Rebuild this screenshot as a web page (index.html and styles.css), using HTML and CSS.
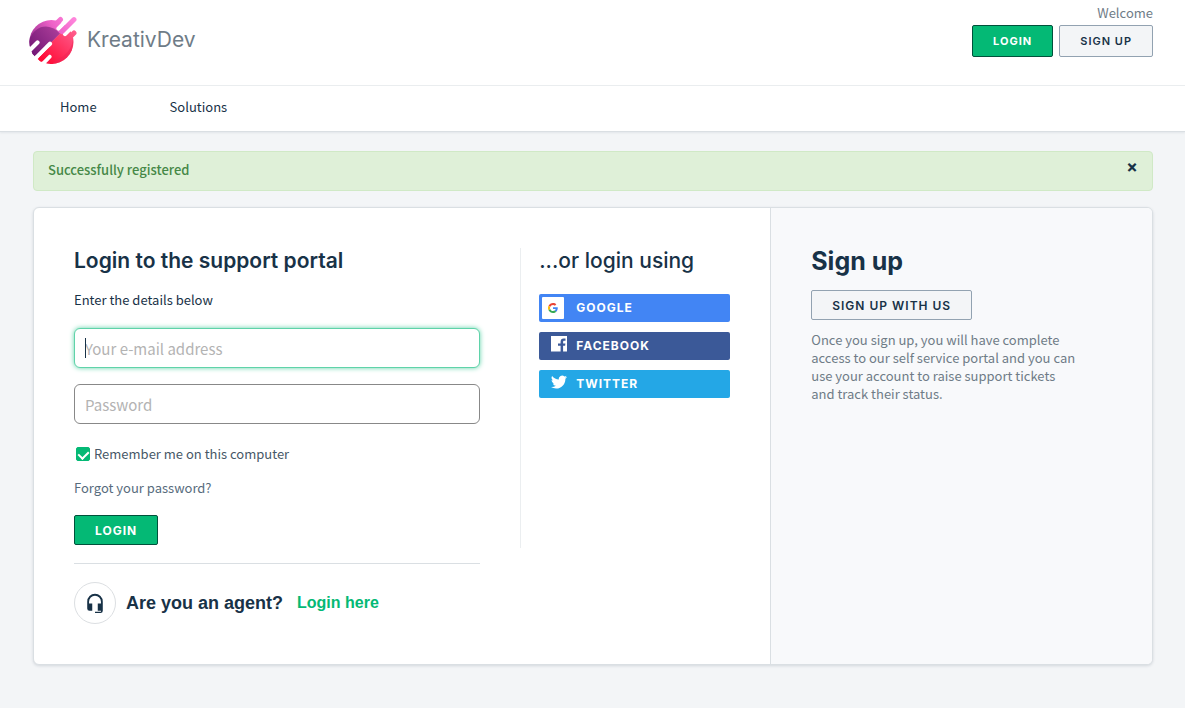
FILE: index.html
```html
<!DOCTYPE html>
<html lang="en">
<head>
    <meta charset="UTF-8">
    <meta name="viewport" content="width=device-width, initial-scale=1.0">
    <title>KreativDev - Support Portal</title>
    <link rel="stylesheet" href="styles.css">
</head>
<body>
    <header class="header">
        <a class="brand" href="#">
            <svg class="logo" viewBox="0 0 48 48" aria-hidden="true">
                <defs>
                    <linearGradient id="pink" gradientUnits="userSpaceOnUse" x1="46" y1="3" x2="2" y2="34">
                        <stop offset="0" stop-color="#ff86dc"/>
                        <stop offset="0.4" stop-color="#ee62c8"/>
                        <stop offset="1" stop-color="#8b2788"/>
                    </linearGradient>
                    <linearGradient id="purple" gradientUnits="userSpaceOnUse" x1="32" y1="12" x2="4" y2="36">
                        <stop offset="0" stop-color="#b0409c"/>
                        <stop offset="1" stop-color="#761a78"/>
                    </linearGradient>
                    <linearGradient id="red" gradientUnits="userSpaceOnUse" x1="44" y1="14" x2="16" y2="46">
                        <stop offset="0" stop-color="#ff5c8c"/>
                        <stop offset="1" stop-color="#ff0a35"/>
                    </linearGradient>
                    <clipPath id="disc"><circle cx="22.4" cy="26" r="22"/></clipPath>
                </defs>
                <g clip-path="url(#disc)">
                    <path d="M0 0H48.4L0 48.4z" fill="url(#pink)"/>
                    <path d="M0 48.4L48.4 0V48.4z" fill="url(#red)"/>
                    <path d="M0 48.4V24C6 9 20 6 31 17.4z" fill="url(#purple)"/>
                    <path d="M44 20C44 36 32 46 16 44L20 50H48V20z" fill="#ee2354" opacity=".5"/>
                </g>
                <g fill="none" stroke="#fff" stroke-width="4.2" stroke-linecap="round">
                    <path d="M29.5 12.500L44 -2M36 18L50 4M8.500 26.500L-4 39M21 27.700L-2 50.700M20.500 40.800L10 51.300"/>
                </g>
                <g fill="none" stroke-width="5" stroke-linecap="round">
                    <path d="M26 9L31.500 3.500M33 15.600L45 3.600" stroke="url(#pink)"/>
                    <path d="M14 28L5.500 36.500" stroke="url(#purple)"/>
                    <path d="M38 24L45 17M22 33.300L12.300 43M27 41L22.500 45.500" stroke="url(#red)"/>
                </g>
            </svg>
            <span class="brand-name">KreativDev</span>
        </a>
        <div class="account">
            <span class="welcome">Welcome</span>
            <div class="account-buttons">
                <button class="btn btn-primary btn-top" type="button">Login</button>
                <button class="btn btn-plain btn-top" type="button">Sign up</button>
            </div>
        </div>
    </header>

    <nav class="nav">
        <a href="#">Home</a>
        <a href="#">Solutions</a>
    </nav>

    <main class="page">
        <div class="alert" role="status">
            <span>Successfully registered</span>
            <button class="alert-close" type="button" aria-label="Close">×</button>
        </div>

        <div class="card">
            <div class="card-main">
                <section class="login">
                    <h3 class="title title-login">Login to the support portal</h3>
                    <p class="hint">Enter the details below</p>
                    <form>
                        <div class="field-wrap">
                            <input class="field" type="email" placeholder="Your e-mail address" aria-label="Your e-mail address" autofocus>
                        </div>
                        <input class="field" type="password" placeholder="Password" aria-label="Password">
                        <label class="remember">
                            <input type="checkbox" checked>
                            Remember me on this computer
                        </label>
                        <a class="forgot" href="#">Forgot your password?</a>
                        <button class="btn btn-primary btn-login" type="submit">Login</button>
                    </form>
                    <div class="agent">
                        <span class="agent-icon">
                            <svg viewBox="0 0 24 24" aria-hidden="true">
                                <path d="M12 2a8.500 8.500 0 0 0-8.500 8.500V18A2.500 2.500 0 0 0 6 20.500h3v-8H5.500v-2a6.500 6.500 0 0 1 13 0v2H15v8h3.500v1H12v1.500h6a2.500 2.500 0 0 0 2.500-2.500V10.500A8.500 8.500 0 0 0 12 2z"/>
                            </svg>
                        </span>
                        <span class="agent-text">Are you an agent?</span>
                        <a class="agent-link" href="#">Login here</a>
                    </div>
                </section>

                <section class="social">
                    <h3 class="title">...or login using</h3>
                    <a class="social-btn google" href="#">
                        <span class="google-box">
                            <svg viewBox="0 0 48 48" aria-hidden="true">
                                <path fill="#ea4335" d="M24 9.500c3.540 0 6.710 1.220 9.210 3.600l6.850-6.850C35.900 2.380 30.470 0 24 0 14.620 0 6.510 5.380 2.560 13.220l7.980 6.190C12.430 13.720 17.740 9.500 24 9.500z"/>
                                <path fill="#4285f4" d="M46.980 24.550c0-1.570-.15-3.090-.38-4.550H24v9.020h12.940c-.58 2.960-2.260 5.480-4.780 7.180l7.730 6c4.510-4.180 7.090-10.360 7.090-17.650z"/>
                                <path fill="#fbbc05" d="M10.530 28.590c-.48-1.450-.76-2.990-.76-4.590s.27-3.140.76-4.590l-7.980-6.190C.92 16.460 0 20.120 0 24s.92 7.540 2.560 10.780z"/>
                                <path fill="#34a853" d="M24 48c6.480 0 11.930-2.130 15.890-5.810l-7.730-6c-2.150 1.450-4.920 2.300-8.160 2.300-6.260 0-11.570-4.220-13.470-9.910l-7.980 6.190C6.510 42.620 14.620 48 24 48z"/>
                            </svg>
                        </span>
                        <span>Google</span>
                    </a>
                    <a class="social-btn facebook" href="#">
                        <svg class="social-icon" viewBox="0 0 16 16" aria-hidden="true">
                            <path fill="#fff" d="M0 0h16v15.500h-3.900V9.700h2l.3-2.300h-2.300V6c0-.8.300-1.200 1.200-1.200h1.200V2.600h-1.800c-2.100 0-3.100 1.200-3.100 3.300v1.500H7V9.700h2.600v5.800H0z"/>
                        </svg>
                        <span>Facebook</span>
                    </a>
                    <a class="social-btn twitter" href="#">
                        <svg class="social-icon" viewBox="0 0 24 24" aria-hidden="true">
                            <path fill="#fff" d="M24 4.560a9.830 9.830 0 0 1-2.830.77 4.930 4.930 0 0 0 2.170-2.720 9.860 9.860 0 0 1-3.130 1.190 4.920 4.920 0 0 0-8.380 4.480A13.980 13.980 0 0 1 1.670 3.150a4.930 4.930 0 0 0 1.520 6.570 4.900 4.900 0 0 1-2.230-.61c-.05 2.280 1.580 4.410 3.950 4.890a4.930 4.930 0 0 1-2.220.08 4.930 4.930 0 0 0 4.600 3.420A9.900 9.900 0 0 1 0 19.540a13.940 13.940 0 0 0 7.550 2.210c9.140 0 14.310-7.720 14-14.640A10.020 10.020 0 0 0 24 4.560z"/>
                        </svg>
                        <span>Twitter</span>
                    </a>
                </section>
            </div>

            <aside class="signup">
                <h2 class="signup-title">Sign up</h2>
                <button class="btn btn-plain btn-signup" type="button">Sign up with us</button>
                <p class="signup-text">Once you sign up, you will have complete access to our self service portal and you can use your account to raise support tickets and track their status.</p>
            </aside>
        </div>
    </main>
</body>
</html>
```
FILE: styles.css
```css
* { margin: 0; padding: 0; box-sizing: border-box; }

body {
    font-family: "Noto Sans CJK SC", "Noto Sans", sans-serif;
    font-size: 13px;
    line-height: 18px;
    background: #f3f5f7;
    color: #183247;
}

a {
    color: inherit;
    text-decoration: none;
}

/* header */
.header {
    display: flex;
    justify-content: space-between;
    align-items: flex-start;
    padding: 0 32px 0 29px;
    height: 86px;
    background: #fff;
    border-bottom: 1px solid #ebeef0;
}

.brand {
    display: flex;
    align-items: center;
    gap: 10px;
    padding-top: 16px;
}

.logo {
    width: 48px;
    height: 48px;
}

.brand-name {
    font-family: Inter, sans-serif;
    font-size: 21px;
    line-height: 28px;
    color: #6f7c87;
}

.account {
    display: flex;
    flex-direction: column;
    align-items: flex-end;
    gap: 3px;
    padding-top: 4px;
}

.welcome {
    color: #6f7c87;
}

.account-buttons {
    display: flex;
    gap: 6px;
}

.btn {
    height: 30px;
    padding: 0 20px;
    border: 1px solid;
    border-radius: 2px;
    font-family: Inter, sans-serif;
    font-size: 12px;
    font-weight: 600;
    letter-spacing: 1px;
    text-transform: uppercase;
    cursor: pointer;
}

.btn-primary {
    background: #04b975;
    border-color: #00513b;
    color: #fff;
    font-weight: 700;
}

.btn-plain {
    background: #f3f5f7;
    border-color: #92a2b1;
    color: #183247;
}

.btn-top {
    height: 32px;
    font-size: 11px;
}

/* nav */
.nav {
    display: flex;
    gap: 73px;
    padding: 12px 60px 15px;
    background: #fff;
    border-bottom: 1px solid #dadfe3;
    box-shadow: 0 1px 2px rgba(24, 50, 71, 0.08);
}

.page {
    padding: 19px 32px 40px 33px;
}

.alert {
    display: flex;
    justify-content: space-between;
    align-items: flex-start;
    padding: 9px 14px;
    height: 40px;
    margin-bottom: 16px;
    background: #dff0d8;
    border: 1px solid #d0e9c6;
    border-radius: 4px;
    color: #468847;
    font-weight: 500;
}

.alert-close {
    width: 12px;
    height: 12px;
    background: none;
    border: none;
    font-family: Inter, sans-serif;
    font-size: 17px;
    font-weight: 700;
    line-height: 10px;
    color: #183247;
    cursor: pointer;
}

/* card */
.card {
    display: grid;
    grid-template-columns: 27fr 14fr;
    background: #fff;
    border: 1px solid #dadfe3;
    border-radius: 6px;
    box-shadow: 0 1px 3px rgba(24, 50, 71, 0.15);
    overflow: hidden;
}

.card-main {
    display: flex;
    align-items: flex-start;
    padding: 40px;
}

.login {
    flex: 1;
    padding-right: 40px;
}

.title {
    font-family: Inter, sans-serif;
    font-size: 21px;
    font-weight: 500;
    line-height: 26px;
}

.title-login {
    font-weight: 600;
}

.hint {
    margin: 17px 0 19px;
}

.field-wrap {
    position: relative;
}

/* text caret of the focused field */
.field-wrap:focus-within::after {
    content: "";
    position: absolute;
    top: 10px;
    left: 11px;
    width: 1px;
    height: 20px;
    background: #183247;
}

.field-wrap .field {
    caret-color: transparent;
}

.field {
    display: block;
    width: 100%;
    height: 40px;
    padding: 0 10px;
    margin-bottom: 16px;
    border: 1px solid #888;
    border-radius: 6px;
    font-family: inherit;
    font-size: 15px;
    color: #183247;
}

.field::placeholder {
    color: #b3b3b3;
}

.field:focus {
    outline: none;
    border-color: #5fd3a9;
    box-shadow: 0 0 5px #5fd3a9;
}

.remember {
    display: flex;
    align-items: center;
    gap: 4px;
    padding: 5px 0 0 2px;
    color: #475867;
}

.remember input {
    display: flex;
    justify-content: center;
    appearance: none;
    width: 14px;
    height: 14px;
    padding-top: 1px;
    border: 1px solid #888;
    border-radius: 2px;
}

.remember input:checked {
    background: #04b975;
    border-color: #04b975;
}

.remember input:checked::after {
    content: "";
    width: 5px;
    height: 8px;
    border: solid #fff;
    border-width: 0 2px 2px 0;
    transform: rotate(45deg);
}

.forgot {
    display: block;
    margin: 16px 0 18px;
    color: #576c7d;
}

.agent {
    display: flex;
    align-items: center;
    margin-top: 18px;
    padding-top: 18px;
    border-top: 1px solid #dadfe3;
    font-family: "Liberation Sans", Arial, sans-serif;
    font-weight: 700;
}

.agent-icon {
    display: flex;
    align-items: center;
    justify-content: center;
    width: 42px;
    height: 42px;
    margin-right: 10px;
    border: 1px solid #dcdfe2;
    border-radius: 50%;
}

.agent-icon svg {
    width: 22px;
    height: 22px;
    fill: #183247;
}

.agent-text {
    margin-right: 14px;
    font-size: 18px;
}

.agent-link {
    font-size: 16px;
    color: #04b975;
}

/* social */
.social {
    display: flex;
    flex-direction: column;
    gap: 10px;
    width: 210px;
    min-height: 300px;
    padding-left: 18px;
    border-left: 1px solid #ebeef0;
}

.social .title {
    margin-bottom: 10px;
}

.social-btn {
    display: flex;
    align-items: center;
    gap: 9px;
    height: 28px;
    padding-left: 12px;
    border-radius: 2px;
    color: #fff;
    font-family: Inter, sans-serif;
    font-size: 12px;
    font-weight: 700;
    letter-spacing: 1px;
    text-transform: uppercase;
}

.social-icon {
    width: 16px;
    height: 16px;
    margin-bottom: 4px;
}

.google {
    gap: 12px;
    padding-left: 3px;
    background: #4285f4;
}

.google-box {
    display: flex;
    align-items: center;
    justify-content: center;
    width: 22px;
    height: 22px;
    background: #fff;
    border-radius: 1px;
}

.google-box svg {
    width: 10px;
    height: 10px;
}

.facebook {
    background: #3b5998;
}

.twitter {
    background: #24a7e6;
}

/* sign up */
.signup {
    padding: 36px 40px;
    background: #f8f9fb;
    border-left: 1px solid #dadfe3;
}

.signup-title {
    margin-bottom: 12px;
    font-family: Inter, sans-serif;
    font-size: 25px;
    font-weight: 700;
    line-height: 34px;
}

.signup-text {
    max-width: 268px;
    margin-top: 11px;
    color: #6f7c87;
}
```
